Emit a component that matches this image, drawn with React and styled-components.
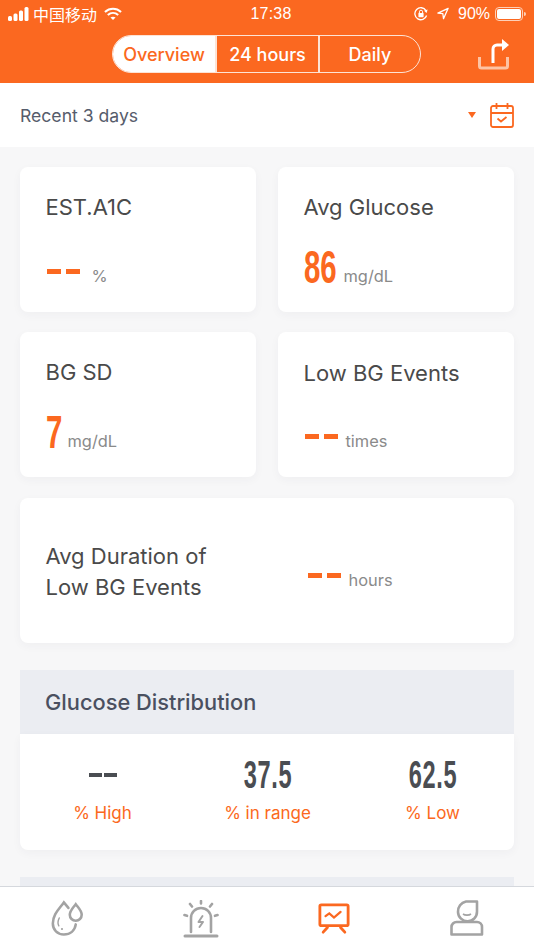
import React from 'react';
import styled, { createGlobalStyle } from 'styled-components';

const orange = '#fb6820';

const Global = createGlobalStyle`
  html, body { margin: 0; padding: 0; }
  body { font-family: Inter, "Noto Sans CJK SC", sans-serif; background: #f7f7f8; }
`;

const Screen = styled.div`
  width: 534px;
  height: 950px;
  display: flex;
  flex-direction: column;
  overflow: hidden;
  background: #f7f7f8;
`;

const Header = styled.header`
  height: 83px;
  flex: none;
  box-sizing: border-box;
  background: ${orange};
  color: #fff;
`;

const StatusBar = styled.div`
  height: 27px;
  padding: 0 8px;
  display: flex;
  align-items: center;
  font-family: "Liberation Sans", "Noto Sans CJK SC", sans-serif;
  font-size: 16px;
  color: #fff;
`;

const StatusSide = styled.div`
  flex: 1;
  display: flex;
  align-items: center;
  justify-content: ${({ $end }) => ($end ? 'flex-end' : 'flex-start')};
`;

const StatusItem = styled.span`
  display: flex;
  align-items: center;
  margin-left: ${({ $gap }) => $gap}px;
`;

const Clock = styled.div`
  font-size: 16px;
  letter-spacing: 0.2px;
  margin-left: 8px;
`;

const NavRow = styled.div`
  display: flex;
  align-items: center;
  height: 38px;
  margin-top: 8px;
  padding-left: 112px;
`;

const Segments = styled.div`
  display: flex;
  width: 309px;
  height: 38px;
  box-sizing: border-box;
  border: 1px solid #fde3d5;
  border-radius: 20px;
  overflow: hidden;
`;

const Segment = styled.div`
  width: ${({ $w }) => $w}px;
  flex: none;
  box-sizing: border-box;
  display: flex;
  align-items: center;
  justify-content: center;
  font-size: 18px;
  font-weight: 500;
  background: ${({ $active }) => ($active ? '#fff' : 'transparent')};
  color: ${({ $active }) => ($active ? orange : '#fff')};
  & + & { border-left: 2px solid #fde3d5; }
`;

const ShareButton = styled.div`
  margin-left: 57px;
  display: flex;
`;

const FilterBar = styled.div`
  height: 64px;
  flex: none;
  background: #fff;
  display: flex;
  align-items: center;
  padding: 0 20px;
  box-sizing: border-box;
`;

const FilterLabel = styled.div`
  flex: 1;
  font-size: 17.6px;
  color: #565c6b;
`;

const Caret = styled.div`
  width: 0;
  height: 0;
  border-left: 4.5px solid transparent;
  border-right: 4.5px solid transparent;
  border-top: 6px solid ${orange};
  margin-right: 14px;
`;

const Content = styled.main`
  flex: 1;
  min-height: 0;
  overflow: hidden;
  padding: 20px 20px 0;
  display: flex;
  flex-direction: column;
`;

const CardGrid = styled.div`
  display: grid;
  grid-template-columns: 236px 236px;
  column-gap: 22px;
  row-gap: 20px;
`;

const Card = styled.section`
  height: 145px;
  box-sizing: border-box;
  background: #fff;
  border-radius: 8px;
  box-shadow: 0 3px 10px rgba(40, 50, 80, 0.04);
  padding: 25px 25.5px 0;
  display: flex;
  flex-direction: column;
`;

const WideCard = styled(Card)`
  grid-column: 1 / 3;
  flex-direction: row;
  align-items: center;
  margin-top: 1px;
  padding: 0 25.5px;
`;

const CardTitle = styled.div`
  font-size: 22px;
  line-height: 30px;
  color: #4a4a4a;
  margin-top: ${({ $low }) => ($low ? 1 : 0)}px;
`;

const WideTitle = styled(CardTitle)`
  width: 261px;
  margin-top: 3px;
  line-height: 31px;
`;

const Reading = styled.div`
  display: flex;
  align-items: flex-end;
  height: 40px;
  margin-top: ${({ $low }) => ($low ? 24 : 25)}px;
`;

const WideReading = styled(Reading)`
  margin-top: 0;
`;

const BigNumber = styled.span`
  display: inline-block;
  width: ${({ $w }) => $w}px;
  font-family: "Liberation Sans", sans-serif;
  font-weight: 700;
  font-size: 46px;
  line-height: 40px;
  color: ${orange};
  transform: scaleX(0.64);
  transform-origin: left center;
`;

const Dashes = styled.div`
  display: flex;
  gap: 5px;
  width: 33px;
  margin: 0 8px 13px 1px;
`;

const Dash = styled.i`
  width: 14px;
  height: 5px;
  background: ${orange};
  display: block;
`;

const Unit = styled.span`
  font-size: 16.4px;
  line-height: 20px;
  color: #8a8a8a;
  margin-bottom: 1px;
  margin-left: ${({ $gap }) => $gap || 0}px;
`;

const PanelHead = styled.div`
  height: 64px;
  margin-top: 27px;
  flex: none;
  background: #ebedf2;
  display: flex;
  align-items: center;
  padding: 0 25px;
  font-size: 21.8px;
  font-weight: 500;
  color: #4a5060;
`;

const PanelBody = styled.div`
  height: 116px;
  flex: none;
  background: #fff;
  border-radius: 0 0 8px 8px;
  box-shadow: 0 3px 10px rgba(40, 50, 80, 0.04);
  display: grid;
  grid-template-columns: 165px 165px 165px;
`;

const NextPanel = styled.div`
  height: 60px;
  margin-top: 27px;
  flex: none;
  background: #ebedf2;
`;

const Stat = styled.div`
  display: flex;
  flex-direction: column;
  align-items: center;
`;

const StatValue = styled.div`
  height: 34px;
  margin-top: 24px;
  display: flex;
  align-items: center;
  gap: 2px;
  font-family: "Liberation Sans", sans-serif;
  font-weight: 700;
  font-size: 38px;
  line-height: 34px;
  color: #4a4d52;
  transform: scaleX(${({ $plain }) => ($plain ? 1 : 0.62)});
  letter-spacing: 1px;
`;

const StatDash = styled.i`
  display: block;
  width: 13px;
  height: 4px;
  background: #4a4d52;
`;

const StatLabel = styled.div`
  margin-top: 10px;
  font-size: 17px;
  line-height: 22px;
  color: ${orange};
`;

const TabBar = styled.nav`
  height: 64px;
  flex: none;
  box-sizing: border-box;
  border-top: 1px solid #d5d8dd;
  background: #fff;
  display: grid;
  grid-template-columns: repeat(4, 1fr);
  padding: 0 1px;
`;

const Tab = styled.div`
  display: flex;
  justify-content: center;
  align-items: flex-start;
  padding-top: ${({ $active }) => ($active ? 16 : 13)}px;
  color: ${({ $active }) => ($active ? orange : '#a3a3a3')};
`;

const SignalIcon = () => (
  <svg width="21" height="14" viewBox="0 0 21 14" fill="#fff">
    <rect x="0" y="9" width="4" height="5" rx="1.5" />
    <rect x="5.5" y="6.5" width="4" height="7.5" rx="1.5" />
    <rect x="11" y="3.5" width="4" height="10.5" rx="1.5" />
    <rect x="16.5" y="0" width="4" height="14" rx="1.5" />
  </svg>
);

const WifiIcon = () => (
  <svg width="18" height="14" viewBox="0 0 19 14" fill="none" stroke="#fff" strokeWidth="2.2">
    <path d="M1 4.8 C6 0.3 13 0.3 18 4.8" />
    <path d="M4 8 C7.2 5.2 11.8 5.2 15 8" />
    <path d="M9.5 13.4 L6.8 10.7 C8.3 9.5 10.7 9.5 12.2 10.7 Z" fill="#fff" stroke="none" />
  </svg>
);

const LockIcon = () => (
  <svg width="14" height="14" viewBox="0 0 14 14" fill="none">
    <path d="M12.6 8.5 A6 6 0 1 1 12 3.6" stroke="#fff" strokeWidth="1.3" />
    <path d="M13.6 2.5 L12.6 6 L10 3.8 Z" fill="#fff" />
    <rect x="4.4" y="6" width="5.2" height="4.2" rx="0.6" fill="#fff" />
    <path d="M5.4 6 V4.8 a1.6 1.6 0 0 1 3.2 0 V6" stroke="#fff" strokeWidth="1" />
  </svg>
);

const LocationIcon = () => (
  <svg width="12" height="13" viewBox="0 0 14 14" fill="none" stroke="#fff" strokeWidth="1.5" strokeLinejoin="round">
    <path d="M13 1 L1 6.5 L6.8 7.2 L7.6 13 Z" />
  </svg>
);

const BatteryIcon = () => (
  <svg width="31" height="14" viewBox="0 0 31 14" fill="none">
    <rect x="0.5" y="0.5" width="27" height="13" rx="3.5" stroke="#fdd0b8" />
    <rect x="2" y="2" width="24" height="10" rx="2" fill="#fff" />
    <path d="M29 5 a2 2 0 0 1 0 4 Z" fill="#fdd0b8" />
  </svg>
);

const ShareIcon = () => (
  <svg width="31" height="31" viewBox="0 0 31 31" fill="none" strokeWidth="3">
    <path d="M1.5 18 V27 a2 2 0 0 0 2 2 H27.5 a2 2 0 0 0 2-2 V18" stroke="#fdc3a4" />
    <path d="M15 24 V10 a4 4 0 0 1 4-4 H26" stroke="#fff" />
    <path d="M24 0 L31 6 L24 12 Z" fill="#fff" />
  </svg>
);

const CalendarIcon = () => (
  <svg width="24" height="26" viewBox="0 0 24 26" fill="none" stroke={orange} strokeWidth="1.8">
    <rect x="1" y="4" width="22" height="21" rx="2" />
    <path d="M1 11 H23 M6.5 1 V7 M17.5 1 V7" />
    <path d="M7.5 16.5 L11 19.5 L16.5 15" />
  </svg>
);

const DropsIcon = () => (
  <svg width="33" height="36" viewBox="0 0 36 38" fill="none" stroke="currentColor" strokeWidth="2.8" strokeLinecap="round">
    <path d="M19 8 L14 2 C9 9 2 15 2 25 C2 32 7 37 14 37 C21 37 26 33 27 26" />
    <path d="M27 4 C24 8 20.5 11 20.5 15.5 A6.5 6.5 0 0 0 33.5 15.5 C33.5 11 30 8 27 4 Z" />
    <path d="M9 19 C7.5 22 7 25 8.5 27.5" strokeWidth="1.6" />
    <circle cx="12" cy="31" r="0.6" strokeWidth="1.2" />
  </svg>
);

const AlarmIcon = () => (
  <svg width="36" height="38" viewBox="0 0 36 38" fill="none" stroke="currentColor" strokeWidth="2.6" strokeLinecap="round">
    <path d="M8 32 V18 a10 10 0 0 1 20 0 V32" />
    <path d="M2 36 H34" strokeWidth="3" />
    <path d="M18 1 V3.5 M7 4 L9 6.5 M29 4 L27 6.5 M1.5 15 L4 15.8 M34.5 15 L32 15.8" />
    <path d="M19.5 16 L15.5 22 H20 L16.5 27" strokeWidth="2" strokeLinejoin="round" />
  </svg>
);

const ScreenIcon = () => (
  <svg width="32" height="32" viewBox="0 0 34 34" fill="none" stroke="currentColor" strokeWidth="3" strokeLinecap="round">
    <rect x="2" y="2" width="30" height="22" rx="1.5" />
    <path d="M8 14 L12 11 L17 15.5 L24 9.5" strokeWidth="2.4" />
    <path d="M10 26 L5.5 31 M24 26 L28.5 31" />
  </svg>
);

const PersonIcon = () => (
  <svg width="34" height="36" viewBox="0 0 34 36" fill="none" stroke="currentColor" strokeWidth="2.6" strokeLinejoin="round">
    <path d="M16 1.5 H27 V11.5 A9 9 0 0 1 8 12 A10 10 0 0 1 16 1.5 Z" />
    <path d="M13 14 C15 15.5 19 15.5 21 14" strokeWidth="1.6" />
    <path d="M1.5 34.5 V27 a5 5 0 0 1 5-5 H27 a5 5 0 0 1 5 5 V34.5 Z" />
  </svg>
);

const DashReading = () => (
  <Dashes>
    <Dash />
    <Dash />
  </Dashes>
);

export default function App() {
  return (
    <Screen>
      <Global />
      <Header>
        <StatusBar>
          <StatusSide>
            <SignalIcon />
            <StatusItem $gap={4}>中国移动</StatusItem>
            <StatusItem $gap={7}><WifiIcon /></StatusItem>
          </StatusSide>
          <Clock>17:38</Clock>
          <StatusSide $end>
            <LockIcon />
            <StatusItem $gap={9}><LocationIcon /></StatusItem>
            <StatusItem $gap={9}>90%</StatusItem>
            <StatusItem $gap={5}><BatteryIcon /></StatusItem>
          </StatusSide>
        </StatusBar>
        <NavRow>
          <Segments>
            <Segment $w={102} $active>Overview</Segment>
            <Segment $w={103}>24 hours</Segment>
            <Segment $w={102}>Daily</Segment>
          </Segments>
          <ShareButton><ShareIcon /></ShareButton>
        </NavRow>
      </Header>

      <FilterBar>
        <FilterLabel>Recent 3 days</FilterLabel>
        <Caret />
        <CalendarIcon />
      </FilterBar>

      <Content>
        <CardGrid>
          <Card>
            <CardTitle>EST.A1C</CardTitle>
            <Reading>
              <DashReading />
              <Unit $gap={4}>%</Unit>
            </Reading>
          </Card>
          <Card>
            <CardTitle>Avg Glucose</CardTitle>
            <Reading>
              <BigNumber $w={40}>86</BigNumber>
              <Unit>mg/dL</Unit>
            </Reading>
          </Card>
          <Card>
            <CardTitle>BG SD</CardTitle>
            <Reading>
              <BigNumber $w={22}>7</BigNumber>
              <Unit>mg/dL</Unit>
            </Reading>
          </Card>
          <Card>
            <CardTitle $low>Low BG Events</CardTitle>
            <Reading $low>
              <DashReading />
              <Unit>times</Unit>
            </Reading>
          </Card>
          <WideCard>
            <WideTitle>Avg Duration of<br />Low BG Events</WideTitle>
            <WideReading>
              <DashReading />
              <Unit>hours</Unit>
            </WideReading>
          </WideCard>
        </CardGrid>

        <PanelHead>Glucose Distribution</PanelHead>
        <PanelBody>
          <Stat>
            <StatValue $plain><StatDash /><StatDash /></StatValue>
            <StatLabel>% High</StatLabel>
          </Stat>
          <Stat>
            <StatValue>37.5</StatValue>
            <StatLabel>% in range</StatLabel>
          </Stat>
          <Stat>
            <StatValue>62.5</StatValue>
            <StatLabel>% Low</StatLabel>
          </Stat>
        </PanelBody>
        <NextPanel />
      </Content>

      <TabBar>
        <Tab><DropsIcon /></Tab>
        <Tab><AlarmIcon /></Tab>
        <Tab $active><ScreenIcon /></Tab>
        <Tab><PersonIcon /></Tab>
      </TabBar>
    </Screen>
  );
}
